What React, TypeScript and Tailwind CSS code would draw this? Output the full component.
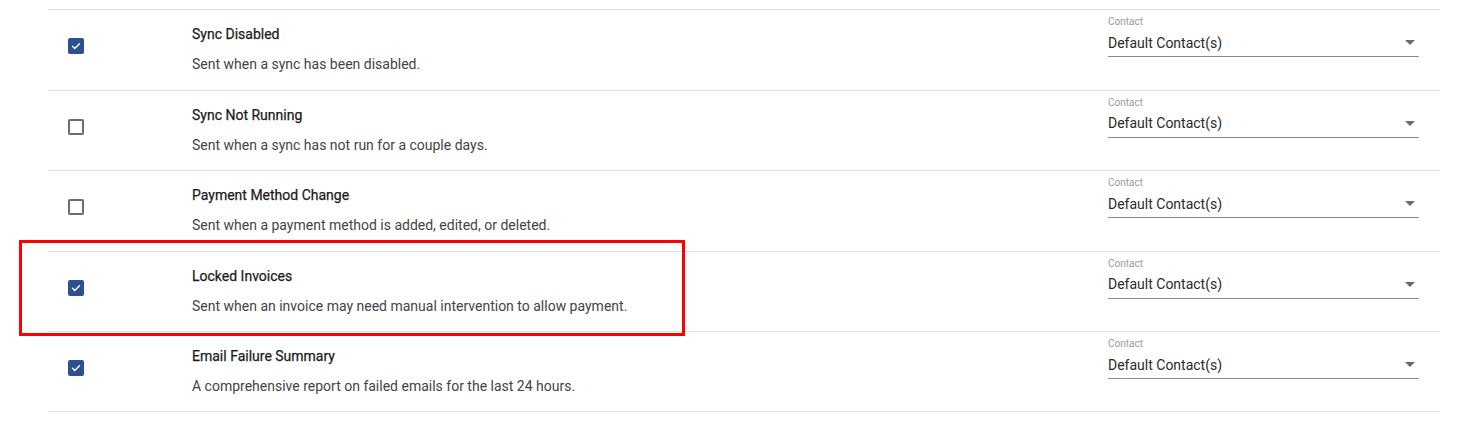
import React from "react";

type Row = { title: string; desc: string; checked: boolean };

const rows: Row[] = [
  { title: "Sync Disabled", desc: "Sent when a sync has been disabled.", checked: true },
  { title: "Sync Not Running", desc: "Sent when a sync has not run for a couple days.", checked: false },
  { title: "Payment Method Change", desc: "Sent when a payment method is added, edited, or deleted.", checked: false },
  { title: "Locked Invoices", desc: "Sent when an invoice may need manual intervention to allow payment.", checked: true },
  { title: "Email Failure Summary", desc: "A comprehensive report on failed emails for the last 24 hours.", checked: true },
];

function Checkbox({ checked }: { checked: boolean }) {
  if (checked) {
    return (
      <div className="w-[16px] h-[16px] rounded-[2px] bg-[#2d5091] flex items-center justify-center">
        <svg width="12" height="12" viewBox="0 0 24 24" fill="none">
          <path d="M5 12.5l4.5 4.5L19 7.5" stroke="#ffffff" strokeWidth="2.6" strokeLinecap="round" strokeLinejoin="round" />
        </svg>
      </div>
    );
  }
  return <div className="w-[16px] h-[16px] rounded-[2px] border-2 border-[#6b6b6b] bg-white" />;
}

export default function App() {
  return (
    <div className="relative w-[1482px] h-[439px] bg-white overflow-hidden" style={{ fontFamily: "Roboto, 'Liberation Sans', sans-serif" }}>
      <div className="ml-[48px] mr-[42px] pt-[9px]">
        {rows.map((r, i) => (
          <div
            key={i}
            className={`flex h-[80.5px] border-t border-[#e3e3e3] ${i === rows.length - 1 ? "border-b" : ""}`}
          >
            <div className="w-[144px] pl-[20px] pt-[28px] shrink-0">
              <Checkbox checked={r.checked} />
            </div>
            <div className="flex-1 pt-[14px]">
              <div className="text-[14px] leading-[20px] font-normal text-[#1c1c1c] [-webkit-text-stroke:0.25px_#1c1c1c]">{r.title}</div>
              <div className="mt-[10px] text-[14px] leading-[20px] text-[#444444]">{r.desc}</div>
            </div>
            <div className="w-[333px] pr-[21px] pt-[6px] shrink-0 pl-[1px]">
              <div className="text-[10px] leading-[12px] text-[#9a9a9a]">Contact</div>
              <div className="mt-[1px] h-[28px] border-b border-[#8a8a8a] flex items-center justify-between">
                <span className="text-[14px] leading-[20px] text-[#2a2a2a]">Default Contact(s)</span>
                <svg width="10" height="5" viewBox="0 0 10 5" className="mr-[4px]">
                  <path d="M0 0h10L5 5z" fill="#6b6b6b" />
                </svg>
              </div>
            </div>
          </div>
        ))}
      </div>
      <div className="absolute left-[19px] top-[240px] w-[666px] h-[96px] border-[3px] border-[#ff0000]" />
    </div>
  );
}
